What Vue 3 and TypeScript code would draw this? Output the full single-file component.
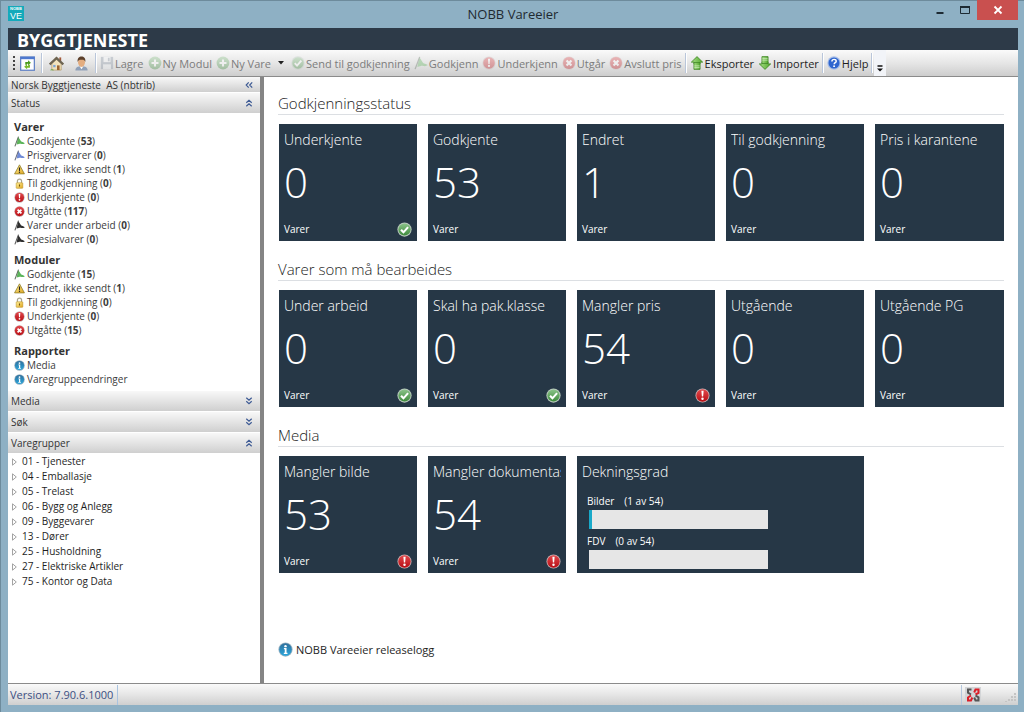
<script setup lang="ts">
interface Tool {
  icon: string
  label?: string
  title?: string
  disabled?: boolean
  caret?: boolean
  divider?: boolean
}
interface StatusItem {
  icon: string
  label: string
  count?: number
}
interface StatusGroup {
  title: string
  items: StatusItem[]
}
interface Tile {
  title: string
  value: number
  badge?: 'ok' | 'alert'
}
interface Section {
  title: string
  tiles: Tile[]
  coverage?: boolean
}

const tools: Tool[] = [
  { icon: 'refresh', title: 'Oppdater', divider: true },
  { icon: 'home', title: 'Hjem' },
  { icon: 'user', title: 'Bruker', divider: true },
  { icon: 'save', label: 'Lagre', disabled: true },
  { icon: 'plus', label: 'Ny Modul', disabled: true },
  { icon: 'plus', label: 'Ny Vare', disabled: true, caret: true },
  { icon: 'ok', label: 'Send til godkjenning', disabled: true },
  { icon: 'flag-green', label: 'Godkjenn', disabled: true },
  { icon: 'alert', label: 'Underkjenn', disabled: true },
  { icon: 'cross', label: 'Utgår', disabled: true },
  { icon: 'cross', label: 'Avslutt pris', disabled: true, divider: true },
  { icon: 'up', label: 'Eksporter' },
  { icon: 'down', label: 'Importer', divider: true },
  { icon: 'help', label: 'Hjelp', divider: true },
]

const groups: StatusGroup[] = [
  {
    title: 'Varer',
    items: [
      { icon: 'flag-green', label: 'Godkjente', count: 53 },
      { icon: 'flag-blue', label: 'Prisgivervarer', count: 0 },
      { icon: 'warn', label: 'Endret, ikke sendt', count: 1 },
      { icon: 'lock', label: 'Til godkjenning', count: 0 },
      { icon: 'alert', label: 'Underkjente', count: 0 },
      { icon: 'cross', label: 'Utgåtte', count: 117 },
      { icon: 'flag-black', label: 'Varer under arbeid', count: 0 },
      { icon: 'flag-black', label: 'Spesialvarer', count: 0 },
    ],
  },
  {
    title: 'Moduler',
    items: [
      { icon: 'flag-green', label: 'Godkjente', count: 15 },
      { icon: 'warn', label: 'Endret, ikke sendt', count: 1 },
      { icon: 'lock', label: 'Til godkjenning', count: 0 },
      { icon: 'alert', label: 'Underkjente', count: 0 },
      { icon: 'cross', label: 'Utgåtte', count: 15 },
    ],
  },
  {
    title: 'Rapporter',
    items: [
      { icon: 'info', label: 'Media' },
      { icon: 'info', label: 'Varegruppeendringer' },
    ],
  },
]

const productGroups: string[] = [
  '01 - Tjenester',
  '04 - Emballasje',
  '05 - Trelast',
  '06 - Bygg og Anlegg',
  '09 - Byggevarer',
  '13 - Dører',
  '25 - Husholdning',
  '27 - Elektriske Artikler',
  '75 - Kontor og Data',
]

const sections: Section[] = [
  {
    title: 'Godkjenningsstatus',
    tiles: [
      { title: 'Underkjente', value: 0, badge: 'ok' },
      { title: 'Godkjente', value: 53 },
      { title: 'Endret', value: 1 },
      { title: 'Til godkjenning', value: 0 },
      { title: 'Pris i karantene', value: 0 },
    ],
  },
  {
    title: 'Varer som må bearbeides',
    tiles: [
      { title: 'Under arbeid', value: 0, badge: 'ok' },
      { title: 'Skal ha pak.klasse', value: 0, badge: 'ok' },
      { title: 'Mangler pris', value: 54, badge: 'alert' },
      { title: 'Utgående', value: 0 },
      { title: 'Utgående PG', value: 0 },
    ],
  },
  {
    title: 'Media',
    tiles: [
      { title: 'Mangler bilde', value: 53, badge: 'alert' },
      { title: 'Mangler dokumentasjon', value: 54, badge: 'alert' },
    ],
    coverage: true,
  },
]

const coverage = [
  { id: 'bilder', label: 'Bilder', done: 1, total: 54 },
  { id: 'fdv', label: 'FDV', done: 0, total: 54 },
]
</script>

<template>
  <div class="window">
    <svg class="sprite" aria-hidden="true">
      <defs>
        <linearGradient id="gRed" x1="0" y1="0" x2="0" y2="1">
          <stop offset="0" stop-color="#e0484c" /><stop offset="1" stop-color="#b90e14" />
        </linearGradient>
        <linearGradient id="gGreen" x1="0" y1="0" x2="0" y2="1">
          <stop offset="0" stop-color="#8cc48a" /><stop offset="1" stop-color="#3d8a3b" />
        </linearGradient>
        <linearGradient id="gArrow" x1="0" y1="0" x2="1" y2="0">
          <stop offset="0" stop-color="#a5dd84" /><stop offset="1" stop-color="#55a92f" />
        </linearGradient>
        <linearGradient id="gBlue" x1="0" y1="0" x2="0" y2="1">
          <stop offset="0" stop-color="#2f6f9c" /><stop offset="1" stop-color="#2ba6dc" />
        </linearGradient>
        <linearGradient id="gGold" x1="0" y1="0" x2="1" y2="1">
          <stop offset="0" stop-color="#fff3a0" /><stop offset="1" stop-color="#e0a41c" />
        </linearGradient>
      </defs>
      <symbol id="alert" viewBox="0 0 16 16">
        <circle cx="8" cy="8" r="7.5" fill="#c8b4b6" />
        <circle cx="8" cy="8" r="6.6" fill="url(#gRed)" />
        <path d="M6.8 3h2.4l-.5 6H7.3z" fill="#fff" /><circle cx="8" cy="11.4" r="1.3" fill="#fff" />
      </symbol>
      <symbol id="cross" viewBox="0 0 16 16">
        <circle cx="8" cy="8" r="7.5" fill="#c8a4a6" />
        <circle cx="8" cy="8" r="6.8" fill="url(#gRed)" />
        <path d="M5.2 5.2l5.6 5.6M10.8 5.2l-5.6 5.6" stroke="#fff" stroke-width="2.5" />
      </symbol>
      <symbol id="ok" viewBox="0 0 16 16">
        <circle cx="8" cy="8" r="7.6" fill="#b9c9bd" />
        <circle cx="8" cy="8" r="6.5" fill="url(#gGreen)" />
        <path d="M4.3 8.2l2.6 2.8 4.9-5.6" fill="none" stroke="#fff" stroke-width="2.2" />
      </symbol>
      <symbol id="plus" viewBox="0 0 16 16">
        <circle cx="8" cy="8" r="7.3" fill="url(#gGreen)" />
        <path d="M8 4v8M4 8h8" stroke="#fff" stroke-width="2.4" />
      </symbol>
      <symbol id="info" viewBox="0 0 16 16">
        <circle cx="8" cy="8" r="7.6" fill="#9db4c2" />
        <circle cx="8" cy="8" r="6.7" fill="url(#gBlue)" />
        <circle cx="8" cy="4.4" r="1.3" fill="#fff" />
        <path d="M6.3 6.5h2.8v5h1v1.3H6.2v-1.3h1V7.8h-.9z" fill="#fff" />
      </symbol>
      <symbol id="help" viewBox="0 0 16 16">
        <circle cx="8" cy="8" r="7.6" fill="#a9bfe8" />
        <circle cx="8" cy="8" r="6.3" fill="#2f66cf" />
        <path d="M5.6 6.2c.2-3.2 5.2-3 4.9-.1-.2 1.6-2.3 1.6-2.3 3.4" fill="none" stroke="#fff" stroke-width="1.7" />
        <circle cx="8.1" cy="11.6" r="1.1" fill="#fff" />
      </symbol>
      <symbol id="warn" viewBox="0 0 16 16">
        <path d="M8 1.2L15.2 14.4H.8z" fill="url(#gGold)" stroke="#8d7a24" stroke-width="1.1" stroke-linejoin="round" />
        <path d="M7 5h2l-.4 5H7.4z" fill="#222" /><circle cx="8" cy="12" r="1" fill="#222" />
      </symbol>
      <symbol id="lock" viewBox="0 0 16 16">
        <path d="M5 8V4.5a3 3 0 0 1 6 0V8" fill="none" stroke="#a9a58f" stroke-width="1.8" />
        <rect x="3.2" y="7" width="9.6" height="8" rx="1" fill="url(#gGold)" stroke="#b98d1e" stroke-width=".8" />
        <path d="M8 9.4v3" stroke="#6d5310" stroke-width="1.6" />
      </symbol>
      <symbol id="flag-green" viewBox="0 0 16 16">
        <path d="M6 1.5c2 2.500 3 4.300 4.200 6.300 1.500 1.600 3 .8 5.600 2.600-2.600 1.900-4.200 1-6 .8-1.600-.2-3.200.6-6 1.300z" fill="#5cb45a" />
        <path d="M6.500 1L1.300 15" stroke="#5d6e5d" stroke-width="1.500" />
      </symbol>
      <symbol id="flag-blue" viewBox="0 0 16 16">
        <path d="M6 1.500c2 2.500 3 4.300 4.200 6.300 1.500 1.600 3 .8 5.600 2.600-2.600 1.900-4.200 1-6 .8-1.600-.2-3.200.6-6 1.300z" fill="#6f8ad6" />
        <path d="M6.500 1L1.300 15" stroke="#63687c" stroke-width="1.500" />
      </symbol>
      <symbol id="flag-black" viewBox="0 0 16 16">
        <path d="M6 1.500c2 2.500 3 4.300 4.200 6.300 1.500 1.600 3 .8 5.600 2.600-2.600 1.900-4.200 1-6 .8-1.600-.2-3.200.6-6 1.300z" fill="#2e2e2e" />
        <path d="M6.500 1L1.300 15" stroke="#555" stroke-width="1.500" />
      </symbol>
      <symbol id="refresh" viewBox="0 0 16 16">
        <rect x=".7" y="1" width="14.600" height="14.200" fill="#fdfdff" stroke="#5d7fc4" stroke-width="1.300" />
        <path d="M.5 2.200h15" stroke="#4d78cf" stroke-width="2.400" />
        <path d="M5.600 9.400V6.300h3V4.600l3 2.700-3 2.700V8.200H7.500v1.200z" fill="#4a9a1e" />
        <path d="M10.600 9.300v3.200h-3v1.700l-3.200-2.700 3.200-2.600v1.700h1.100V9.300z" fill="#76b82a" />
      </symbol>
      <symbol id="home" viewBox="0 0 16 16">
        <path d="M3 8l5-5 5 5v7H3z" fill="#f2e3bd" stroke="#b0925c" stroke-width=".7" />
        <path d="M11 1.500h2v4h-2z" fill="#a2583a" />
        <path d="M.8 9L8 2.200 15.200 9" fill="none" stroke="#6e6552" stroke-width="2.400" />
        <path d="M8.500 10h2.800v5H8.500z" fill="#9c6530" />
        <path d="M4.500 9.500h2.500V12H4.500z" fill="#7ba6d8" />
        <path d="M1 15.300c1.500-1.600 3-1.300 4.500 0z" fill="#5da644" />
      </symbol>
      <symbol id="user" viewBox="0 0 16 16">
        <path d="M1.500 15.500c0-3.600 2.500-4.500 6.500-4.500s6.500.9 6.500 4.500z" fill="#8fa0b8" />
        <path d="M6 11l2 3 2-3z" fill="#fff" />
        <ellipse cx="8" cy="6.600" rx="3.700" ry="5" fill="#e3ad80" />
        <path d="M3.900 6.500C3.400 2.200 5.600.5 8 .5s4.600 1.700 4.100 6C11.200 3.600 9.500 4 8 4s-3.200-.4-4.100 2.500z" fill="#5b3f2a" />
      </symbol>
      <symbol id="save" viewBox="0 0 16 16">
        <path d="M1 1h14v14H1z" fill="#8390a0" />
        <path d="M4 1h8v6H4z" fill="#f4f6f8" /><path d="M3.500 9.500h9V15h-9z" fill="#e9edf0" />
        <path d="M9 2h2v4H9z" fill="#8390a0" />
      </symbol>
      <symbol id="up" viewBox="0 0 16 16">
        <path d="M8 .7l6.500 6.300h-3v2h-7V7h-3z" fill="url(#gArrow)" stroke="#3d8424" stroke-width=".9" />
        <path d="M4.500 7.500h7v7.800h-7z" fill="url(#gArrow)" stroke="#3d8424" stroke-width=".9" />
        <path d="M5 11.300h6M5 13.300h6" stroke="#d5f0c5" stroke-width=".8" />
      </symbol>
      <symbol id="down" viewBox="0 0 16 16">
        <path d="M8 15.300L1.500 9h3V7h7v2h3z" fill="url(#gArrow)" stroke="#3d8424" stroke-width=".9" />
        <path d="M4.500.7h7v7.800h-7z" fill="url(#gArrow)" stroke="#3d8424" stroke-width=".9" />
        <path d="M5 2.700h6M5 4.700h6" stroke="#d5f0c5" stroke-width=".8" />
      </symbol>
      <symbol id="chev-down" viewBox="0 0 8 8">
        <path d="M1.300.8L4 3.300 6.700.8M1.300 4.300L4 6.800l2.700-2.500" fill="none" stroke="#3d5a94" stroke-width="1.200" />
      </symbol>
      <symbol id="chev-up" viewBox="0 0 8 8">
        <path d="M1.300 3.700L4 1.200l2.700 2.500M1.300 7.200L4 4.700l2.700 2.500" fill="none" stroke="#3d5a94" stroke-width="1.200" />
      </symbol>
      <symbol id="chev-left" viewBox="0 0 8 8">
        <path d="M3.700 1.300L1.200 4l2.500 2.700M7.200 1.300L4.700 4l2.500 2.700" fill="none" stroke="#3d5a94" stroke-width="1.200" />
      </symbol>
      <symbol id="offline" viewBox="0 0 16 16">
        <path d="M0 0h16v16H0z" fill="#d3d5d7" />
        <g fill="none" stroke-width="2">
          <path d="M6.500 2.500H3v3.200l3 1.800" stroke="#555" />
          <path d="M9.200 5.500l1.300-3H13.500V6L10.500 7.500" stroke="#dc1f28" />
          <path d="M6 8.500L3 10.500v3h3l1.300-3" stroke="#dc1f28" />
          <path d="M10.500 8.500l3 1.800v3.200H10.500L9.200 10.500" stroke="#555" />
        </g>
      </symbol>
    </svg>

    <header class="titlebar">
      <span class="app-icon"><span class="app-small">NOBB</span><span class="app-big">VE</span></span>
      <h1 class="title">NOBB Vareeier</h1>
      <div class="controls">
        <button class="control" type="button" aria-label="Minimer">
          <svg width="10" height="10" viewBox="0 0 10 10"><path d="M1.500 8h7" stroke="#1d2a33" stroke-width="2" /></svg>
        </button>
        <button class="control" type="button" aria-label="Maksimer">
          <svg width="10" height="10" viewBox="0 0 10 10">
            <path d="M.5 2.500h9v6h-9z" fill="none" stroke="#1d2a33" /><path d="M0 2h10" stroke="#1d2a33" stroke-width="2" />
          </svg>
        </button>
        <button class="control close" type="button" aria-label="Lukk">
          <svg width="10" height="10" viewBox="0 0 10 10"><path d="M1.500 1.500l7 7M8.500 1.500l-7 7" stroke="#fff" stroke-width="1.800" /></svg>
        </button>
      </div>
    </header>

    <div class="brand">BYGGTJENESTE</div>

    <nav class="toolbar" aria-label="Verktøylinje">
      <span class="grip"></span>
      <template v-for="(tool, i) in tools" :key="i">
        <button
          class="tool"
          :class="{ bare: !tool.label }"
          type="button"
          :disabled="tool.disabled"
          :aria-label="tool.label ?? tool.title"
        >
          <svg class="icon"><use :href="'#' + tool.icon" /></svg>
          <span v-if="tool.label">{{ tool.label }}</span>
        </button>
        <button v-if="tool.caret" class="caret" type="button" aria-label="Flere valg">
          <svg width="6" height="4" viewBox="0 0 6 4"><path d="M0 0h6L3 3.500z" fill="#222" /></svg>
        </button>
        <span v-if="tool.divider" class="divider"></span>
      </template>
      <button class="overflow" type="button" aria-label="Alternativer">
        <svg width="6" height="7" viewBox="0 0 6 7"><path d="M.5 1h5" stroke="#111" stroke-width="1.500" /><path d="M0 3.500h6l-3 3z" fill="#111" /></svg>
      </button>
    </nav>

    <div class="body">
      <aside class="sidebar">
        <button class="bar owner" type="button">
          <span>Norsk Byggtjeneste&nbsp; AS (nbtrib)</span>
          <svg class="chev"><use href="#chev-left" /></svg>
        </button>
        <button class="bar" type="button">
          <span>Status</span><svg class="chev"><use href="#chev-up" /></svg>
        </button>
        <div class="status-panel">
          <section v-for="group in groups" :key="group.title" class="group">
            <h2 class="group-title">{{ group.title }}</h2>
            <ul class="list">
              <li v-for="item in group.items" :key="item.label">
                <a class="status-link" href="#">
                  <svg class="small-icon"><use :href="'#' + item.icon" /></svg>
                  <span>{{ item.label }}<template v-if="item.count !== undefined"> (<b>{{ item.count }}</b>)</template></span>
                </a>
              </li>
            </ul>
          </section>
        </div>
        <button class="bar" type="button">
          <span>Media</span><svg class="chev"><use href="#chev-down" /></svg>
        </button>
        <button class="bar" type="button">
          <span>Søk</span><svg class="chev"><use href="#chev-down" /></svg>
        </button>
        <button class="bar" type="button">
          <span>Varegrupper</span><svg class="chev"><use href="#chev-up" /></svg>
        </button>
        <ul class="list">
          <li v-for="name in productGroups" :key="name">
            <button class="node" type="button">
              <svg width="5" height="8" viewBox="0 0 5 8"><path d="M.5.8v6.400L4.300 4z" fill="#fff" stroke="#a3a3a3" /></svg>
              <span>{{ name }}</span>
            </button>
          </li>
        </ul>
      </aside>

      <main class="content">
        <section v-for="section in sections" :key="section.title" class="section">
          <h2 class="section-title">{{ section.title }}</h2>
          <div class="tiles">
            <button v-for="tile in section.tiles" :key="tile.title" class="tile" type="button">
              <span class="tile-title">{{ tile.title }}</span>
              <span class="tile-value">{{ tile.value }}</span>
              <span class="tile-foot">
                <span>Varer</span>
                <svg v-if="tile.badge" class="badge"><use :href="'#' + tile.badge" /></svg>
              </span>
            </button>
            <div v-if="section.coverage" class="tile wide">
              <span class="tile-title">Dekningsgrad</span>
              <div v-for="row in coverage" :key="row.id" class="meter">
                <label class="meter-label" :for="row.id">
                  <span>{{ row.label }}</span><span>({{ row.done }} av {{ row.total }})</span>
                </label>
                <progress :id="row.id" class="meter-bar" :value="row.done" :max="row.total"></progress>
              </div>
            </div>
          </div>
        </section>
        <a class="release" href="#">
          <svg class="release-icon"><use href="#info" /></svg>
          <span>NOBB Vareeier releaselogg</span>
        </a>
      </main>
    </div>

    <footer class="statusbar">
      <span class="version">Version: 7.90.6.1000</span>
      <span class="net"><svg width="16" height="16"><use href="#offline" /></svg></span>
      <svg class="resize" width="14" height="14" viewBox="0 0 14 14">
        <path d="M12 3v9M9 6v6M6 9v3M3 11v1" stroke="#c4c4c4" stroke-width="2" stroke-dasharray="2 1" />
      </svg>
    </footer>
  </div>
</template>

<style>
body {
  margin: 0;
}
</style>

<style scoped>
.window {
  box-sizing: border-box;
  min-height: 100vh;
  display: flex;
  flex-direction: column;
  padding: 0 6px 7px 8px;
  background: #8eb0c4;
  box-shadow: inset 0 1px #6d8b9c, inset 1px 0 #6d8b9c;
  font-family: "Open Sans", "Noto Sans", sans-serif;
  font-size: 11px;
  color: #1e1e1e;
}
.sprite {
  position: absolute;
  width: 0;
  height: 0;
}
button {
  font: inherit;
  color: inherit;
  border: 0;
  padding: 0;
  margin: 0;
  background: none;
  text-align: left;
}
a {
  color: inherit;
  text-decoration: none;
}
svg {
  flex: none;
  display: block;
}

.titlebar {
  display: grid;
  grid-template-columns: 1fr auto 1fr;
  height: 28px;
}
.app-icon {
  display: flex;
  flex-direction: column;
  align-items: center;
  width: 16px;
  height: 15px;
  margin-top: 6px;
  background: #14aabb;
  color: #fff;
  font-family: "Liberation Sans", sans-serif;
}
.app-small {
  font-size: 4px;
  font-weight: 700;
  line-height: 5px;
}
.app-big {
  font-size: 9px;
  line-height: 10px;
}
.title {
  margin: 0;
  font-size: 13px;
  font-weight: 400;
  line-height: 29px;
  color: #1f2a31;
}
.controls {
  display: flex;
  justify-content: flex-end;
  align-items: flex-start;
}
.control {
  display: flex;
  align-items: center;
  justify-content: center;
  width: 25px;
  height: 20px;
}
.control.close {
  width: 41px;
  background: #c9504f;
}

.brand {
  height: 22px;
  padding-left: 9px;
  background: #2d3a48;
  color: #fff;
  font-size: 18px;
  font-weight: 700;
  line-height: 24px;
}

.toolbar {
  display: flex;
  align-items: center;
  height: 26px;
  border-bottom: 1px solid #8b8b8b;
  background: linear-gradient(#fafafa, #e6e6e6 50%, #cdcdcd);
}
.grip {
  width: 2px;
  height: 14px;
  margin: 0 0 0 5px;
  background: repeating-linear-gradient(#444 0 2px, transparent 2px 4px);
}
.tool {
  display: flex;
  align-items: center;
  gap: 1px;
  padding: 0 2px;
  white-space: nowrap;
}
.tool.bare {
  padding: 0 5px;
}
.tool:disabled {
  color: #7c7c7c;
}
.tool:disabled .icon {
  opacity: 0.35;
}
.icon {
  width: 14px;
  height: 14px;
}
.bare .icon {
  width: 15px;
  height: 15px;
}
.caret {
  padding: 0 5px;
}
.divider {
  width: 1px;
  height: 20px;
  margin: 0 2px 0 1px;
  background: #b9c6da;
  box-shadow: 1px 0 #fff;
}
.overflow {
  align-self: stretch;
  display: flex;
  align-items: flex-end;
  padding: 0 3px 4px;
  background: #f2f4f8;
}

.body {
  flex: 1;
  display: flex;
  background: #fff;
}
.sidebar {
  box-sizing: border-box;
  flex: none;
  width: 256px;
  border-right: 4px solid #858585;
}
.bar {
  box-sizing: border-box;
  display: flex;
  align-items: center;
  justify-content: space-between;
  width: 100%;
  height: 21px;
  padding: 0 7px 0 3px;
  border-bottom: 1px solid #fff;
  background: linear-gradient(#f8f8f8, #e4e4e4 50%, #cfcfcf);
  font-weight: 500;
  font-size: 10px;
  color: #333;
}
.bar.owner {
  height: 16px;
}
.chev {
  width: 8px;
  height: 8px;
}
.status-panel {
  display: flex;
  flex-direction: column;
  gap: 6px;
  padding: 5px 6px;
}
.group-title {
  margin: 0;
  font-size: 11px;
  font-weight: 700;
  line-height: 15px;
  color: #333;
}
.list {
  margin: 0;
  padding: 0;
  list-style: none;
}
.status-link {
  display: flex;
  align-items: center;
  gap: 2px;
  font-size: 10px;
  line-height: 14px;
  color: #3c3c3c;
}
.small-icon {
  width: 11px;
  height: 11px;
}
.node {
  display: flex;
  align-items: center;
  gap: 5px;
  padding-left: 4px;
  font-size: 10px;
  line-height: 15px;
}

.content {
  flex: 1;
  min-width: 0;
  padding: 13px 14px 20px;
}
.section {
  padding-bottom: 15px;
}
.section-title {
  margin: 0 0 9px;
  padding-top: 2px;
  border-bottom: 1px solid #dcdfe3;
  font-size: 15px;
  font-weight: 300;
  line-height: 22px;
  color: #222;
}
.tiles {
  display: grid;
  grid-template-columns: repeat(4, 138fr) 129fr;
  gap: 11px;
  padding-left: 1px;
}
.tile {
  box-sizing: border-box;
  display: flex;
  flex-direction: column;
  min-width: 0;
  height: 117px;
  padding: 5px 5px 4px;
  background: #263746;
  color: #fff;
}
.wide {
  grid-column: span 2;
}
.tile-title {
  overflow: hidden;
  font-size: 14px;
  font-weight: 300;
  line-height: 22px;
  white-space: nowrap;
}
.tile-value {
  flex: 1;
  font-size: 42px;
  font-weight: 350;
  line-height: 62px;
}
.tile-foot {
  display: flex;
  align-items: center;
  justify-content: space-between;
  font-size: 10px;
  line-height: 16px;
}
.badge {
  width: 15px;
  height: 15px;
}
.meter {
  padding: 0 5px;
}
.meter + .meter {
  padding-top: 4px;
}
.wide .tile-title {
  margin-bottom: 11px;
}
.meter-label {
  display: flex;
  gap: 10px;
  font-size: 10px;
  line-height: 17px;
}
.meter-bar {
  appearance: none;
  display: block;
  width: 67%;
  height: 19px;
  margin-left: 2px;
  border: 0;
  background: #e6e6e6;
}
.meter-bar::-webkit-progress-bar {
  background: #e6e6e6;
}
.meter-bar::-webkit-progress-value {
  background: #19a9c9;
}
.release {
  display: inline-flex;
  align-items: center;
  gap: 3px;
  margin-top: 54px;
}
.release-icon {
  width: 15px;
  height: 15px;
}

.statusbar {
  display: flex;
  align-items: center;
  height: 21px;
  border-top: 1px solid #8b8b8b;
  background: linear-gradient(#fafafa, #e6e6e6 50%, #cfcfcf);
}
.version {
  padding: 0 4px 0 2px;
  border-right: 1px solid #a9c3e0;
  line-height: 20px;
  color: #3c4f82;
}
.net {
  margin-left: auto;
  padding: 2px 18px 2px 3px;
  border-left: 1px solid #b5c7dc;
}
.resize {
  margin: 4px 1px 0 4px;
}
</style>
